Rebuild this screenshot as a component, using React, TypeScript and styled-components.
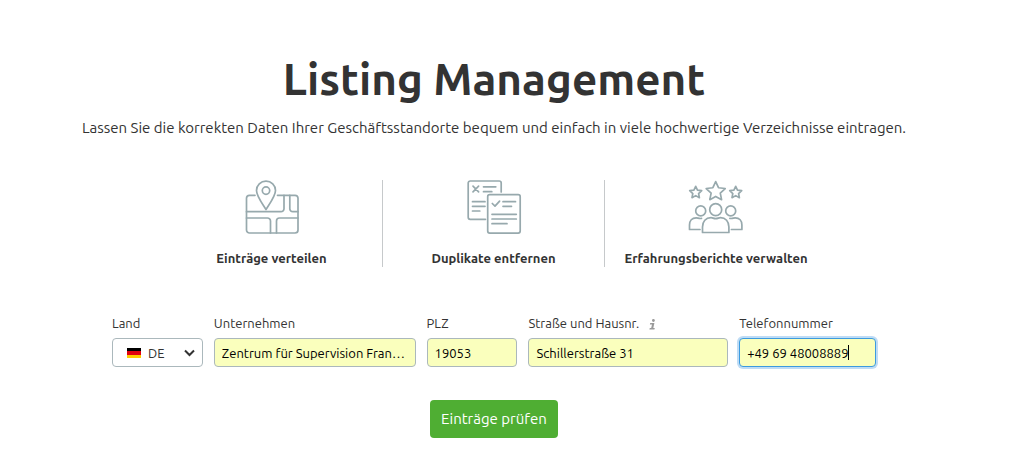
import React, { useState } from "react";
import styled, { createGlobalStyle, css } from "styled-components";

const GlobalStyle = createGlobalStyle`
  *, *::before, *::after { box-sizing: border-box; }
  body {
    margin: 0;
    background: #fff;
    color: #333;
    font-family: Ubuntu, "Noto Sans", sans-serif;
  }
  button, input, select { font: inherit; }
`;

const Page = styled.main`
  display: flex;
  flex-direction: column;
  align-items: center;
  padding: 49px 38px 36px 16px;
`;

const Title = styled.h1`
  margin: 0;
  font-size: 44px;
  line-height: 60px;
  font-weight: 750;
  text-align: center;
`;

const Intro = styled.p`
  margin: 7px 0 0;
  font-size: 15px;
  line-height: 24px;
  text-align: center;
`;

const Features = styled.ul`
  display: grid;
  grid-template-columns: repeat(3, 1fr);
  width: 100%;
  max-width: 666px;
  margin: 40px 0 0;
  padding: 0;
  list-style: none;
`;

const Feature = styled.li`
  display: flex;
  flex-direction: column;
  align-items: center;
  gap: 15px;
  font-size: 13px;
  line-height: 18px;
  font-weight: 700;
  white-space: nowrap;

  &:not(:last-child) {
    border-right: 1px solid #c6c9cb;
  }
`;

const FeatureIcon = styled.svg`
  width: 56px;
  height: 54px;
  fill: none;
  stroke: #97a9ad;
  stroke-width: 1.7;
  stroke-linecap: round;
  stroke-linejoin: round;
`;

const Form = styled.form`
  display: flex;
  flex-direction: column;
  align-items: center;
  width: 100%;
  margin-top: 46px;
`;

const Fields = styled.div`
  display: grid;
  grid-template-columns: 91fr 202fr 91fr 200fr 137fr;
  gap: 11px;
  width: 100%;
  max-width: 764px;
`;

const Field = styled.div`
  min-width: 0;
`;

const LabelRow = styled.div`
  display: flex;
  align-items: center;
  gap: 10px;
  height: 20px;
  margin-bottom: 5px;
  font-size: 13px;
  line-height: 20px;
  white-space: nowrap;
`;

const InfoIcon = styled.svg`
  width: 7px;
  height: 11px;
  margin-top: 3px;
  fill: #999;
`;

const control = css`
  display: block;
  width: 100%;
  height: 29px;
  border: 1px solid #abb8bc;
  border-radius: 4px;
  font-size: 13px;
  outline: none;
`;

const InputBox = styled.div`
  position: relative;
`;

const Input = styled.input<{ $ownCaret?: boolean }>`
  ${control}
  padding: 0 8px 0 7px;
  background: #faffbd;
  color: #000;
  text-overflow: ellipsis;
  caret-color: ${({ $ownCaret }) => ($ownCaret ? "transparent" : "auto")};

  &:focus {
    border-color: #3c9be0;
    box-shadow: 0 0 0 2px #bfdcf5;
  }
`;

const Caret = styled.span`
  position: absolute;
  left: 109px;
  top: 7px;
  width: 1px;
  height: 15px;
  background: #000;
  pointer-events: none;
`;

const SelectBox = styled.div`
  position: relative;
`;

const Select = styled.select`
  ${control}
  appearance: none;
  padding: 0 24px 0 35px;
  background: #fff;
  color: #333;
`;

const Flag = styled.svg`
  position: absolute;
  left: 15px;
  top: 10px;
  width: 14px;
  height: 10px;
  pointer-events: none;
`;

const Chevron = styled.svg`
  position: absolute;
  right: 8px;
  top: 11px;
  width: 11px;
  height: 8px;
  fill: none;
  stroke: #333;
  stroke-width: 2;
  pointer-events: none;
`;

const Submit = styled.button`
  height: 38px;
  margin-top: 33px;
  padding: 0 11px;
  border: 0;
  border-radius: 4px;
  background: #4fae33;
  color: #fff;
  font-size: 15px;
  line-height: 20px;
  cursor: pointer;
`;

const starPath = (cx: number, cy: number, r: number) =>
  Array.from({ length: 10 }, (_, i) => {
    const radius = i % 2 ? r * 0.48 : r;
    const angle = (Math.PI / 5) * i - Math.PI / 2;
    const x = cx + radius * Math.cos(angle);
    const y = cy + radius * Math.sin(angle);
    return `${i ? "L" : "M"}${x.toFixed(2)} ${y.toFixed(2)}`;
  }).join("") + "Z";

const MapIcon = () => (
  <FeatureIcon viewBox="0 0 56 54" aria-hidden="true">
    <path d="M11 15.300H5.500a3 3 0 0 0-3 3V50a3 3 0 0 0 3 3H51a3 3 0 0 0 3-3V18.300a3 3 0 0 0-3-3H33.500" />
    <path d="M22 29.500C19 24.500 12.500 16 12.500 10.400a9.500 9.300 0 0 1 19 0C31.500 16 25 24.500 22 29.500Z" />
    <circle cx="22" cy="10.600" r="3.700" />
    <path d="M2.500 31.700H37a3 3 0 0 0 3-3V15.300M45.800 15.300v13.400a3 3 0 0 0 3 3H54" />
    <path d="M2.500 38h21a3 3 0 0 1 3 3v12M54 38H35.500a3 3 0 0 0-3 3v12" />
  </FeatureIcon>
);

const DocumentsIcon = () => (
  <FeatureIcon viewBox="0 0 56 54" aria-hidden="true">
    <path d="M19.500 39.300H4.200a2 2 0 0 1-2-2V3a2 2 0 0 1 2-2h29a2 2 0 0 1 2 2v9" />
    <rect x="21.700" y="14.700" width="32.500" height="38.400" rx="2" />
    <path d="M7 6.200l5.600 5.600M12.600 6.200L7 11.800" />
    <path d="M17.500 6.800h12.300M17.500 11.700h8.300M6.500 21.700h12.500M6.500 26.300h12.500M6.500 31h7.300" />
    <path d="M26.300 23.500l2.700 2.700 4.600-5" />
    <path d="M37 21.700h12.500M37 26.300h8.500M26 34.300h24.300M26 39h24.300M26 43.700h15" />
  </FeatureIcon>
);

const ReviewsIcon = () => (
  <FeatureIcon viewBox="0 0 56 54" aria-hidden="true">
    <path d={starPath(27.7, 11.6, 10)} />
    <path d={starPath(7.7, 12.6, 6.3)} />
    <path d={starPath(47.7, 12.6, 6.3)} />
    <circle cx="27.700" cy="29.700" r="6" />
    <circle cx="12.700" cy="30.900" r="5" />
    <circle cx="42.700" cy="30.900" r="5" />
    <path d="M14.500 52.500v-5.500c0-5.500 3.300-9.300 8.500-9.300 1.800 0 2.500 1 4.700 1s2.900-1 4.700-1c5.200 0 8.500 3.800 8.500 9.300v5.500Z" />
    <path d="M12 49.500H1.500V45c0-4.300 2.500-7.200 6.700-7.200 1.800 0 2.500 1 5.300.6" />
    <path d="M43.400 49.500h10.500V45c0-4.300-2.500-7.200-6.700-7.200-1.800 0-2.500 1-5.300.6" />
  </FeatureIcon>
);

const features = [
  { label: "Einträge verteilen", Icon: MapIcon },
  { label: "Duplikate entfernen", Icon: DocumentsIcon },
  { label: "Erfahrungsberichte verwalten", Icon: ReviewsIcon },
];

type TextFieldProps = {
  id: string;
  label: string;
  initial: string;
  type?: string;
  info?: boolean;
  autoFocus?: boolean;
};

const TextField = ({ id, label, initial, type = "text", info, autoFocus }: TextFieldProps) => {
  const [value, setValue] = useState(initial);
  const [steadyCaret, setSteadyCaret] = useState(Boolean(autoFocus));
  const releaseCaret = () => setSteadyCaret(false);
  return (
    <Field>
      <LabelRow>
        <label htmlFor={id}>{label}</label>
        {info && (
          <InfoIcon viewBox="0 0 7 11" aria-hidden="true">
            <circle cx="4.400" cy="1.500" r="1.400" />
            <path d="M1.200 4h4.200L4.300 9h1.500l-.4 1.500H.4L.8 9h1.400l.8-3.500H.9Z" />
          </InfoIcon>
        )}
      </LabelRow>
      <InputBox>
        <Input
          id={id}
          type={type}
          value={value}
          autoFocus={autoFocus}
          $ownCaret={steadyCaret}
          onChange={(event) => setValue(event.target.value)}
          onKeyDown={releaseCaret}
          onMouseDown={releaseCaret}
          onBlur={releaseCaret}
        />
        {steadyCaret && <Caret />}
      </InputBox>
    </Field>
  );
};

export default function App() {
  return (
    <>
      <GlobalStyle />
      <Page>
        <Title>Listing Management</Title>
        <Intro>
          Lassen Sie die korrekten Daten Ihrer Geschäftsstandorte bequem und einfach in viele
          hochwertige Verzeichnisse eintragen.
        </Intro>
        <Features>
          {features.map(({ label, Icon }) => (
            <Feature key={label}>
              <Icon />
              {label}
            </Feature>
          ))}
        </Features>
        <Form onSubmit={(event) => event.preventDefault()}>
          <Fields>
            <Field>
              <LabelRow>
                <label htmlFor="country">Land</label>
              </LabelRow>
              <SelectBox>
                <Select id="country" defaultValue="DE">
                  <option>DE</option>
                </Select>
                <Flag viewBox="0 0 14 10" aria-hidden="true">
                  <rect width="14" height="4" fill="#000" />
                  <rect y="3" width="14" height="4" fill="#e1000f" />
                  <rect y="7" width="14" height="3" fill="#fc0" />
                </Flag>
                <Chevron viewBox="0 0 11 8" aria-hidden="true">
                  <path d="M1 1.500l4.500 4.500L10 1.500" />
                </Chevron>
              </SelectBox>
            </Field>
            <TextField id="company" label="Unternehmen" initial="Zentrum für Supervision Fran…" />
            <TextField id="zip" label="PLZ" initial="19053" />
            <TextField id="street" label="Straße und Hausnr." initial="Schillerstraße 31" info />
            <TextField id="phone" label="Telefonnummer" initial="+49 69 48008889" type="tel" autoFocus />
          </Fields>
          <Submit type="submit">Einträge prüfen</Submit>
        </Form>
      </Page>
    </>
  );
}
